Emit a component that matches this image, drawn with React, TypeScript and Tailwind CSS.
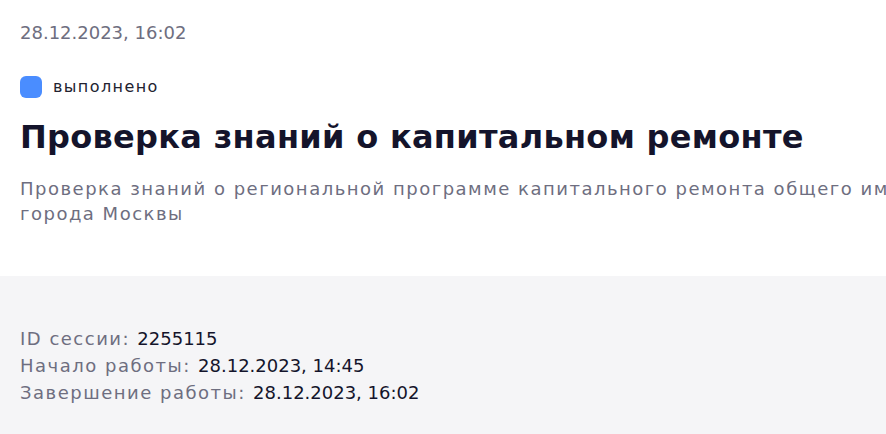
import React from 'react';

const session = [
  { label: 'ID сессии:', value: '2255115' },
  { label: 'Начало работы:', value: '28.12.2023, 14:45' },
  { label: 'Завершение работы:', value: '28.12.2023, 16:02' },
];

const App: React.FC = () => {
  return (
    <div className="w-full h-[434px] overflow-hidden bg-white font-['DejaVu_Sans',sans-serif]">
      <div className="w-[1400px] h-full flex flex-col">
        {/* Header */}
        <div className="px-5 pt-[21px] pb-[50px]">
          <div className="text-[18px] leading-6 text-[#6e6e80]">28.12.2023, 16:02</div>

          <div className="mt-[30px] flex items-center gap-[11px]">
            <span className="w-[22px] h-[22px] rounded-[6px] bg-[#4a8dff]" />
            <span className="text-[16px] leading-6 tracking-[1.4px] text-[#222230]">выполнено</span>
          </div>

          <h1 className="mt-[16px] text-[32px] leading-[44px] font-bold tracking-[0.3px] text-[#14142b]">
            Проверка знаний о капитальном ремонте
          </h1>

          <p className="mt-[17px] text-[18px] leading-[25px] tracking-[1.5px] text-[#6e6e80]">
            Проверка знаний о региональной программе капитального ремонта общего имущества в многоквартирных домах
            <br />
            города Москвы
          </p>
        </div>

        {/* Session info */}
        <div className="flex-1 bg-[#f5f5f7] px-5 pt-[49px]">
          {session.map((row) => (
            <div key={row.label} className="text-[18px] leading-[27px]">
              <span className="text-[#6e6e80] tracking-[1.5px]">{row.label} </span>
              <span className="text-[#14142b]">{row.value}</span>
            </div>
          ))}
        </div>
      </div>
    </div>
  );
};

export default App;
